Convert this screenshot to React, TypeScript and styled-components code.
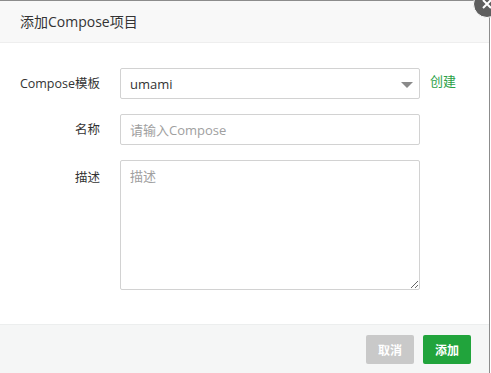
import React from "react";
import styled, { createGlobalStyle } from "styled-components";

const GlobalStyle = createGlobalStyle`
  html, body {
    margin: 0;
    padding: 0;
    background: #fff;
  }
  body {
    font-family: "Open Sans", "Noto Sans CJK SC", sans-serif;
    color: #333;
    overflow: hidden;
  }
`;

const Dialog = styled.div`
  position: relative;
  width: 489px;
  height: 372px;
  border-top: 1px solid #8c8c8c;
  border-right: 1px solid #8c8c8c;
  display: flex;
  flex-direction: column;
  background: #fff;
`;

const Header = styled.div`
  height: 41px;
  line-height: 41px;
  padding-left: 20px;
  background: #f8f8f8;
  border-bottom: 1px solid #eee;
  font-size: 14px;
  color: #333;
`;

const CloseButton = styled.div`
  position: absolute;
  top: -11px;
  right: -12px;
  width: 26px;
  height: 26px;
  border-radius: 50%;
  background: #5e5e5e;
  border: 1px solid #fff;
  display: flex;
  align-items: center;
  justify-content: center;
`;

const Body = styled.div`
  flex: 1;
  padding-top: 25px;
  display: flex;
  flex-direction: column;
  gap: 15px;
`;

const Row = styled.div`
  display: flex;
  align-items: flex-start;
`;

const Label = styled.label<{ $tall?: boolean }>`
  flex: 0 0 120px;
  padding-right: 20px;
  box-sizing: border-box;
  text-align: right;
  font-size: 12.5px;
  line-height: ${(p) => (p.$tall ? "36px" : "31px")};
  color: #333;
  white-space: nowrap;
`;

const Field = styled.div<{ $height: number }>`
  position: relative;
  flex: 0 0 300px;
  height: ${(p) => p.$height}px;
  box-sizing: border-box;
  border: 1px solid #d2d2d2;
  border-radius: 2px;
  background: #fff;
`;

const Input = styled.input`
  width: 100%;
  height: 100%;
  box-sizing: border-box;
  border: 0;
  outline: none;
  padding: 0 9px;
  font-family: inherit;
  font-size: 13px;
  color: #333;
  background: transparent;
  &::placeholder {
    color: #a0a0a0;
  }
`;

const TextArea = styled.textarea`
  display: block;
  width: 100%;
  height: 100%;
  box-sizing: border-box;
  border: 0;
  outline: none;
  padding: 5px 9px;
  font-family: inherit;
  font-size: 13px;
  color: #333;
  resize: both;
  background: transparent;
  &::placeholder {
    color: #a0a0a0;
  }
`;

const Arrow = styled.span`
  position: absolute;
  right: 6px;
  top: 13px;
  width: 0;
  height: 0;
  border-left: 6px solid transparent;
  border-right: 6px solid transparent;
  border-top: 6px solid #8a8a8a;
`;

const CreateLink = styled.a`
  margin-left: 10px;
  font-size: 13px;
  line-height: 27px;
  color: #2aa146;
  text-decoration: none;
`;

const Footer = styled.div`
  height: 49px;
  border-top: 1px solid #eceeee;
  background: #f5f6f6;
  display: flex;
  justify-content: flex-end;
  align-items: flex-start;
  padding: 10px 18px 0 0;
  box-sizing: border-box;
  gap: 9px;
`;

const Button = styled.button<{ $primary?: boolean }>`
  width: 48px;
  height: 29px;
  border: 0;
  border-radius: 2px;
  background: ${(p) => (p.$primary ? "#21a43c" : "#c9c9c9")};
  color: #fff;
  font-family: inherit;
  font-size: 12px;
  font-weight: bold;
  padding: 0;
`;

export default function App() {
  return (
    <>
      <GlobalStyle />
      <Dialog>
        <Header>添加Compose项目</Header>
        <CloseButton>
          <svg width="10" height="10" viewBox="0 0 10 10">
            <path d="M1 1L9 9M9 1L1 9" stroke="#fff" strokeWidth="2" />
          </svg>
        </CloseButton>
        <Body>
          <Row>
            <Label>Compose模板</Label>
            <Field $height={31}>
              <Input readOnly value="umami" />
              <Arrow />
            </Field>
            <CreateLink href="#">创建</CreateLink>
          </Row>
          <Row>
            <Label>名称</Label>
            <Field $height={31}>
              <Input placeholder="请输入Compose" />
            </Field>
          </Row>
          <Row>
            <Label $tall>描述</Label>
            <Field $height={130}>
              <TextArea placeholder="描述" />
            </Field>
          </Row>
        </Body>
        <Footer>
          <Button>取消</Button>
          <Button $primary>添加</Button>
        </Footer>
      </Dialog>
    </>
  );
}
